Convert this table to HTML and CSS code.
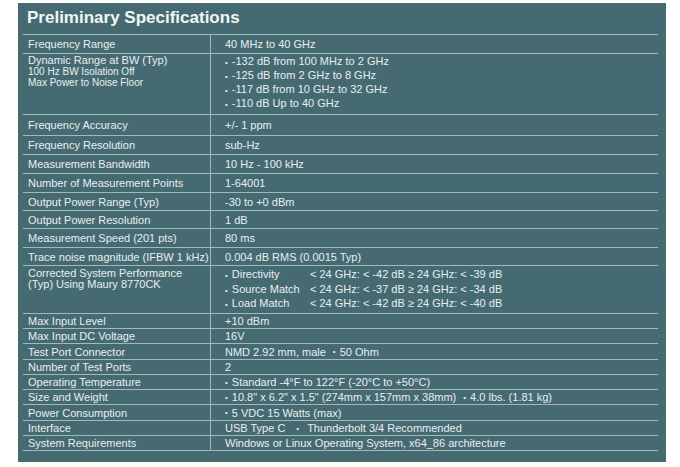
FILE: index.html
```html
<!DOCTYPE html>
<html lang="en">
<head>
<meta charset="utf-8">
<title>Preliminary Specifications</title>
<link rel="stylesheet" href="styles.css">
</head>
<body>
<div class="panel">
  <h1 class="title">Preliminary Specifications</h1>
  <div class="spec">
    <div class="row h19"><div class="k">Frequency Range</div><div class="v">40 MHz to 40 GHz</div></div>
    <div class="row h61 multi">
      <div class="k">
        <div class="l11">Dynamic Range at BW (Typ)</div>
        <div class="l11 small">100 Hz BW Isolation Off</div>
        <div class="l11 small">Max Power to Noise Floor</div>
      </div>
      <div class="v">
        <div class="l13"><span class="b">•</span>-132 dB from 100 MHz to 2 GHz</div>
        <div class="l13"><span class="b">•</span>-125 dB from 2 GHz to 8 GHz</div>
        <div class="l13"><span class="b">•</span>-117 dB from 10 GHz to 32 GHz</div>
        <div class="l13"><span class="b">•</span>-110 dB Up to 40 GHz</div>
      </div>
    </div>
    <div class="row h21"><div class="k">Frequency Accuracy</div><div class="v">+/- 1 ppm</div></div>
    <div class="row h19"><div class="k">Frequency Resolution</div><div class="v">sub-Hz</div></div>
    <div class="row h19"><div class="k">Measurement Bandwidth</div><div class="v">10 Hz - 100 kHz</div></div>
    <div class="row h19"><div class="k">Number of Measurement Points</div><div class="v">1-64001</div></div>
    <div class="row h18"><div class="k">Output Power Range (Typ)</div><div class="v">-30 to +0 dBm</div></div>
    <div class="row h18"><div class="k">Output Power Resolution</div><div class="v">1 dB</div></div>
    <div class="row h19"><div class="k">Measurement Speed (201 pts)</div><div class="v">80 ms</div></div>
    <div class="row h18"><div class="k">Trace noise magnitude (IFBW 1 kHz)</div><div class="v">0.004 dB RMS (0.0015 Typ)</div></div>
    <div class="row h48 multi">
      <div class="k pad2">
        <div class="l11">Corrected System Performance</div>
        <div class="l11">(Typ) Using Maury 8770CK</div>
      </div>
      <div class="v pad2">
        <div class="pairs">
          <div class="l135"><span class="b">•</span>Directivity</div><div class="l135">&lt; 24 GHz: &lt; -42 dB ≥ 24 GHz: &lt; -39 dB</div>
          <div class="l135"><span class="b">•</span>Source Match</div><div class="l135">&lt; 24 GHz: &lt; -37 dB ≥ 24 GHz: &lt; -34 dB</div>
          <div class="l135"><span class="b">•</span>Load Match</div><div class="l135">&lt; 24 GHz: &lt; -42 dB ≥ 24 GHz: &lt; -40 dB</div>
        </div>
      </div>
    </div>
    <div class="row h15"><div class="k">Max Input Level</div><div class="v">+10 dBm</div></div>
    <div class="row h15"><div class="k">Max Input DC Voltage</div><div class="v">16V</div></div>
    <div class="row h16"><div class="k">Test Port Connector</div><div class="v">NMD 2.92 mm, male<span class="b gap">•</span>50 Ohm</div></div>
    <div class="row h15"><div class="k">Number of Test Ports</div><div class="v">2</div></div>
    <div class="row h15"><div class="k">Operating Temperature</div><div class="v"><span class="b">•</span>Standard -4°F to 122°F (-20°C to +50°C)</div></div>
    <div class="row h15"><div class="k">Size and Weight</div><div class="v"><span class="b">•</span>10.8" x 6.2" x 1.5" (274mm x 157mm x 38mm)<span class="b gap">•</span>4.0 lbs. (1.81 kg)</div></div>
    <div class="row h16"><div class="k">Power Consumption</div><div class="v"><span class="b">•</span>5 VDC 15 Watts (max)</div></div>
    <div class="row h15"><div class="k">Interface</div><div class="v">USB Type C<span class="b gap wide">•</span>Thunderbolt 3/4 Recommended</div></div>
    <div class="row h15"><div class="k">System Requirements</div><div class="v">Windows or Linux Operating System, x64_86 architecture</div></div>
  </div>
</div>
</body>
</html>
```

FILE: styles.css
```css
html, body {
  margin: 0;
  padding: 0;
  background: #ffffff;
}

body {
  font-family: "Liberation Sans", Arial, sans-serif;
  color: #e8eff0;
}

.panel {
  box-sizing: border-box;
  margin: 3px 0 0 18px;
  width: 648px;
  height: 459px;
  background: #466a72;
  padding: 5px 8px 11px 5px;
}

.title {
  margin: 0 0 6px 4px;
  font-size: 17px;
  line-height: 20px;
  font-weight: bold;
  color: #f2f6f7;
}

.spec {
  border-top: 1px solid #9fb9bd;
  width: 635px;
}

.row {
  box-sizing: border-box;
  display: grid;
  grid-template-columns: 188px 1fr;
  border-bottom: 1px solid #9fb9bd;
  font-size: 11px;
}

.k {
  border-right: 1px solid #9fb9bd;
  padding-left: 5px;
  display: flex;
  align-items: center;
  white-space: nowrap;
}

.v {
  padding-left: 14px;
  display: flex;
  align-items: center;
  white-space: pre;
}

.multi .k,
.multi .v {
  flex-direction: column;
  align-items: flex-start;
  justify-content: flex-start;
  padding-top: 1px;
}

.multi .pad2 {
  padding-top: 2px;
}

.l11 { line-height: 11px; }
.l13 { line-height: 13px; }
.l135 { line-height: 13.5px; }

.small { font-size: 10px; }

.pairs {
  display: grid;
  grid-template-columns: 85px auto;
}

.b {
  font-size: 8px;
  padding-right: 4px;
}

.gap {
  margin-left: 7px;
}

.wide {
  margin-left: 11px;
  padding-right: 8px;
}

.h15 { height: 15px; }
.h16 { height: 16px; }
.h18 { height: 18px; }
.h19 { height: 19px; }
.h21 { height: 21px; }
.h48 { height: 48px; }
.h61 { height: 61px; }
```
